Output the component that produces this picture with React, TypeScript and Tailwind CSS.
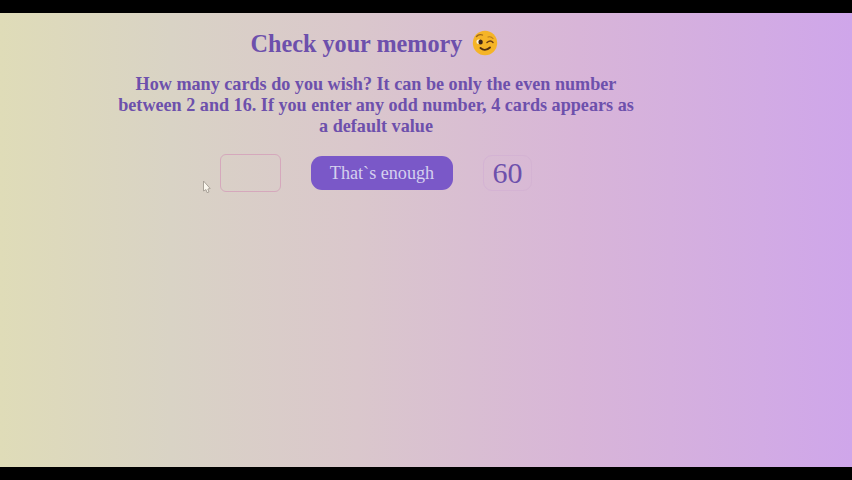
export default function App() {
  return (
    <div className="flex h-[480px] w-[852px] flex-col overflow-hidden bg-black pt-[13px] pb-[13px] font-['Liberation_Serif',serif] text-[#6d50ac]">
      <main className="relative flex w-full flex-1 flex-col bg-[linear-gradient(90deg,#dfdcb8_0%,#d9d3c5_20%,#dac7cc_42%,#d8b5d8_68%,#cfa6ea_100%)]">
        <div className="flex w-[752px] flex-col items-center">
          <h1 className="mt-[16px] mr-[3px] flex h-[30px] items-center gap-[10px] text-[24.2px] leading-[30px] font-bold whitespace-nowrap">
            <span>Check your memory</span>
            <svg className="-mt-[2px]" width="26" height="26" viewBox="0 0 26 26">
              <circle cx="13" cy="13" r="12.2" fill="#f5b427" />
              <circle cx="6.6" cy="11.8" r="2.2" fill="#fff3d6" />
              <ellipse cx="8.6" cy="12" rx="2.2" ry="2.5" fill="#3b2418" />
              <path d="M4.5 6.5Q6.5 3.8 10.5 5" fill="none" stroke="#9c6518" strokeWidth="1.3" strokeLinecap="round" />
              <path d="M16 7Q19 6 21 8.5" fill="none" stroke="#b87a1c" strokeWidth="1.1" strokeLinecap="round" />
              <path d="M15 12.5Q18.5 9.5 21 12.5" fill="none" stroke="#6b3d14" strokeWidth="1.5" strokeLinecap="round" />
              <path d="M8.5 18Q13 22 18 17.5" fill="none" stroke="#54300f" strokeWidth="1.9" strokeLinecap="round" />
            </svg>
          </h1>
          <h2 className="mt-[15px] text-center text-[18.15px] leading-[21px] font-bold whitespace-nowrap">
            How many cards do you wish? It can be only the even number
            <br />
            between 2 and 16. If you enter any odd number, 4 cards appears as
            <br />
            a default value
          </h2>
          <div className="mt-[17px] flex h-[38px] items-center">
            <input className="h-[38px] w-[61px] rounded-[6px] border border-[#d5a8bc] bg-transparent outline-none" />
            <button className="ml-[30px] h-[34px] w-[142px] rounded-[11px] bg-[#7a58c8] text-[18.15px] leading-[34px] text-[#d5d0ee]">
              That`s enough
            </button>
            <div className="ml-[30px] flex h-[36px] w-[49px] items-center justify-center rounded-[9px] border border-[#d4b3d3] text-[30px] leading-[36px]">
              60
            </div>
          </div>
        </div>
        <svg className="absolute top-[167px] left-[202px]" width="10" height="14" viewBox="0 0 10 14">
          <path d="M1.5 1L8.2 8.5L5.8 9L7 12L5 12.6L4 9.6L1.5 11Z" fill="#fbf7ee" stroke="#a39b92" strokeWidth="0.9" />
        </svg>
      </main>
    </div>
  );
}
